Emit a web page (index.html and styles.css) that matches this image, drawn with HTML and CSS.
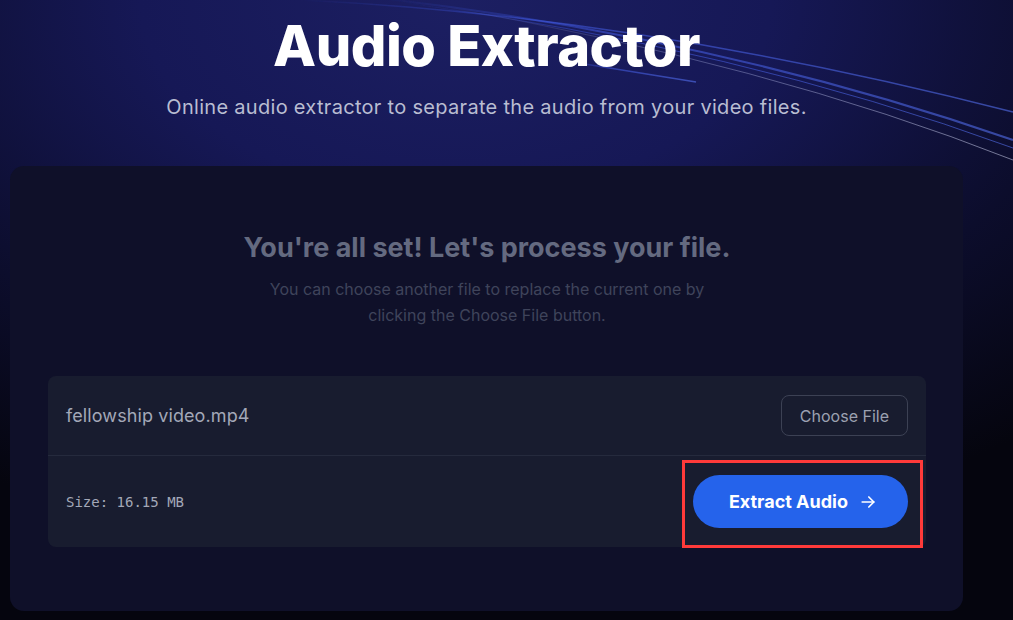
FILE: index.html
```html
<!DOCTYPE html>
<html lang="en">
<head>
    <meta charset="UTF-8">
    <meta name="viewport" content="width=device-width, initial-scale=1.0">
    <title>Audio Extractor</title>
    <link rel="stylesheet" href="styles.css">
</head>
<body>
    <div class="page">
        <svg class="streaks" width="1013" height="200" viewBox="0 0 1013 200" aria-hidden="true">
            <defs>
                <linearGradient id="fade" x1="0" y1="0" x2="1" y2="0">
                    <stop offset="0" stop-color="#3a5cff" stop-opacity="0"/>
                    <stop offset="0.35" stop-color="#4a67ff" stop-opacity="0.45"/>
                    <stop offset="1" stop-color="#5a78ff" stop-opacity="0.55"/>
                </linearGradient>
                <linearGradient id="fadeLight" x1="0" y1="0" x2="1" y2="0">
                    <stop offset="0" stop-color="#c9d0ff" stop-opacity="0"/>
                    <stop offset="0.45" stop-color="#c9d0ff" stop-opacity="0.3"/>
                    <stop offset="1" stop-color="#e0e4ff" stop-opacity="0.5"/>
                </linearGradient>
                <filter id="glow" x="-10%" y="-50%" width="120%" height="200%">
                    <feGaussianBlur stdDeviation="0.7"/>
                </filter>
            </defs>
            <g filter="url(#glow)" fill="none">
                <path d="M300 0 Q640 16 1013 112" stroke="url(#fade)" stroke-width="1.5"/>
                <path d="M380 -2 Q720 38 1013 140" stroke="url(#fade)" stroke-width="2"/>
                <path d="M400 2 Q740 48 1013 148" stroke="url(#fade)" stroke-width="1"/>
                <path d="M440 6 Q770 64 1013 160" stroke="url(#fadeLight)" stroke-width="1"/>
                <path d="M560 60 L696 82" stroke="url(#fade)" stroke-width="1.5"/>
            </g>
        </svg>

        <header class="hero">
            <h1>Audio Extractor</h1>
            <p>Online audio extractor to separate the audio from your video files.</p>
        </header>

        <main class="panel">
            <h2>You're all set! Let's process your file.</h2>
            <p class="hint">You can choose another file to replace the current one by<br>clicking the Choose File button.</p>

            <div class="file-box">
                <div class="file-row">
                    <span class="file-name">fellowship video.mp4</span>
                    <button class="choose-btn">Choose File</button>
                </div>
                <div class="file-row file-row-bottom">
                    <span class="file-size">Size: 16.15 MB</span>
                    <div class="action">
                        <button class="extract-btn">
                            Extract Audio
                            <svg width="20" height="20" viewBox="0 0 24 24" fill="none" stroke="currentColor" stroke-width="2" stroke-linecap="round" stroke-linejoin="round">
                                <path d="M5 12h14"/>
                                <path d="M13 6l6 6-6 6"/>
                            </svg>
                        </button>
                    </div>
                </div>
            </div>
        </main>
    </div>
</body>
</html>
```

FILE: styles.css
```css
body {
    margin: 0;
    font-family: Inter, "Noto Sans", sans-serif;
    background-color: #06060f;
}
.page {
    position: relative;
    min-height: 620px;
    overflow: hidden;
    padding: 10px 50px 0 10px;
    box-sizing: border-box;
    background: radial-gradient(ellipse 900px 560px at 45% 0%, #1c1f62 0%, #161856 35%, #0c0d2c 70%, #05050e 100%);
}
.streaks {
    position: absolute;
    top: 0;
    left: 0;
    pointer-events: none;
}
.hero {
    position: relative;
    text-align: center;
    margin-bottom: 46px;
}
.hero h1 {
    margin: 0;
    color: #ffffff;
    font-size: 56px;
    font-weight: 800;
    letter-spacing: -0.5px;
    line-height: 72px;
}
.hero p {
    margin: 12px 0 0;
    color: #b9bdd2;
    font-size: 20px;
    letter-spacing: 0.3px;
    line-height: 26px;
}
.panel {
    position: relative;
    background-color: #0f1029;
    border-radius: 14px;
    padding: 64px 37px 64px 38px;
    text-align: center;
}
.panel h2 {
    margin: 0;
    color: #646a80;
    font-size: 27px;
    font-weight: 700;
    line-height: 36px;
}
.hint {
    margin: 10px 0 0;
    color: #3f445b;
    font-size: 16px;
    line-height: 26px;
}
.file-box {
    margin-top: 48px;
    background-color: #181c2f;
    border-radius: 8px;
    text-align: left;
}
.file-row {
    display: flex;
    align-items: center;
    justify-content: space-between;
    padding: 19px 18px;
    border-bottom: 1px solid #252a3d;
}
.file-row-bottom {
    border-bottom: none;
}
.file-name {
    color: #a3a8b8;
    font-size: 18px;
    letter-spacing: 0.1px;
}
.file-size {
    color: #a3a8b8;
    font-family: "DejaVu Sans Mono", monospace;
    font-size: 14px;
}
.choose-btn {
    font-family: Inter, sans-serif;
    font-size: 16px;
    color: #9ca1b1;
    background: transparent;
    border: 1px solid #3c4154;
    border-radius: 8px;
    padding: 0 18px;
    height: 41px;
}
.action {
    position: relative;
}
.action::after {
    content: "";
    position: absolute;
    left: -11px;
    right: -15px;
    top: -15px;
    bottom: -20px;
    border: 3px solid #ff3a3a;
    pointer-events: none;
}
.extract-btn {
    display: flex;
    align-items: center;
    gap: 10px;
    height: 53px;
    padding: 0 30px 0 36px;
    border: none;
    border-radius: 27px;
    background-color: #2563eb;
    color: #ffffff;
    font-family: Inter, sans-serif;
    font-size: 18px;
    font-weight: 700;
}
```
